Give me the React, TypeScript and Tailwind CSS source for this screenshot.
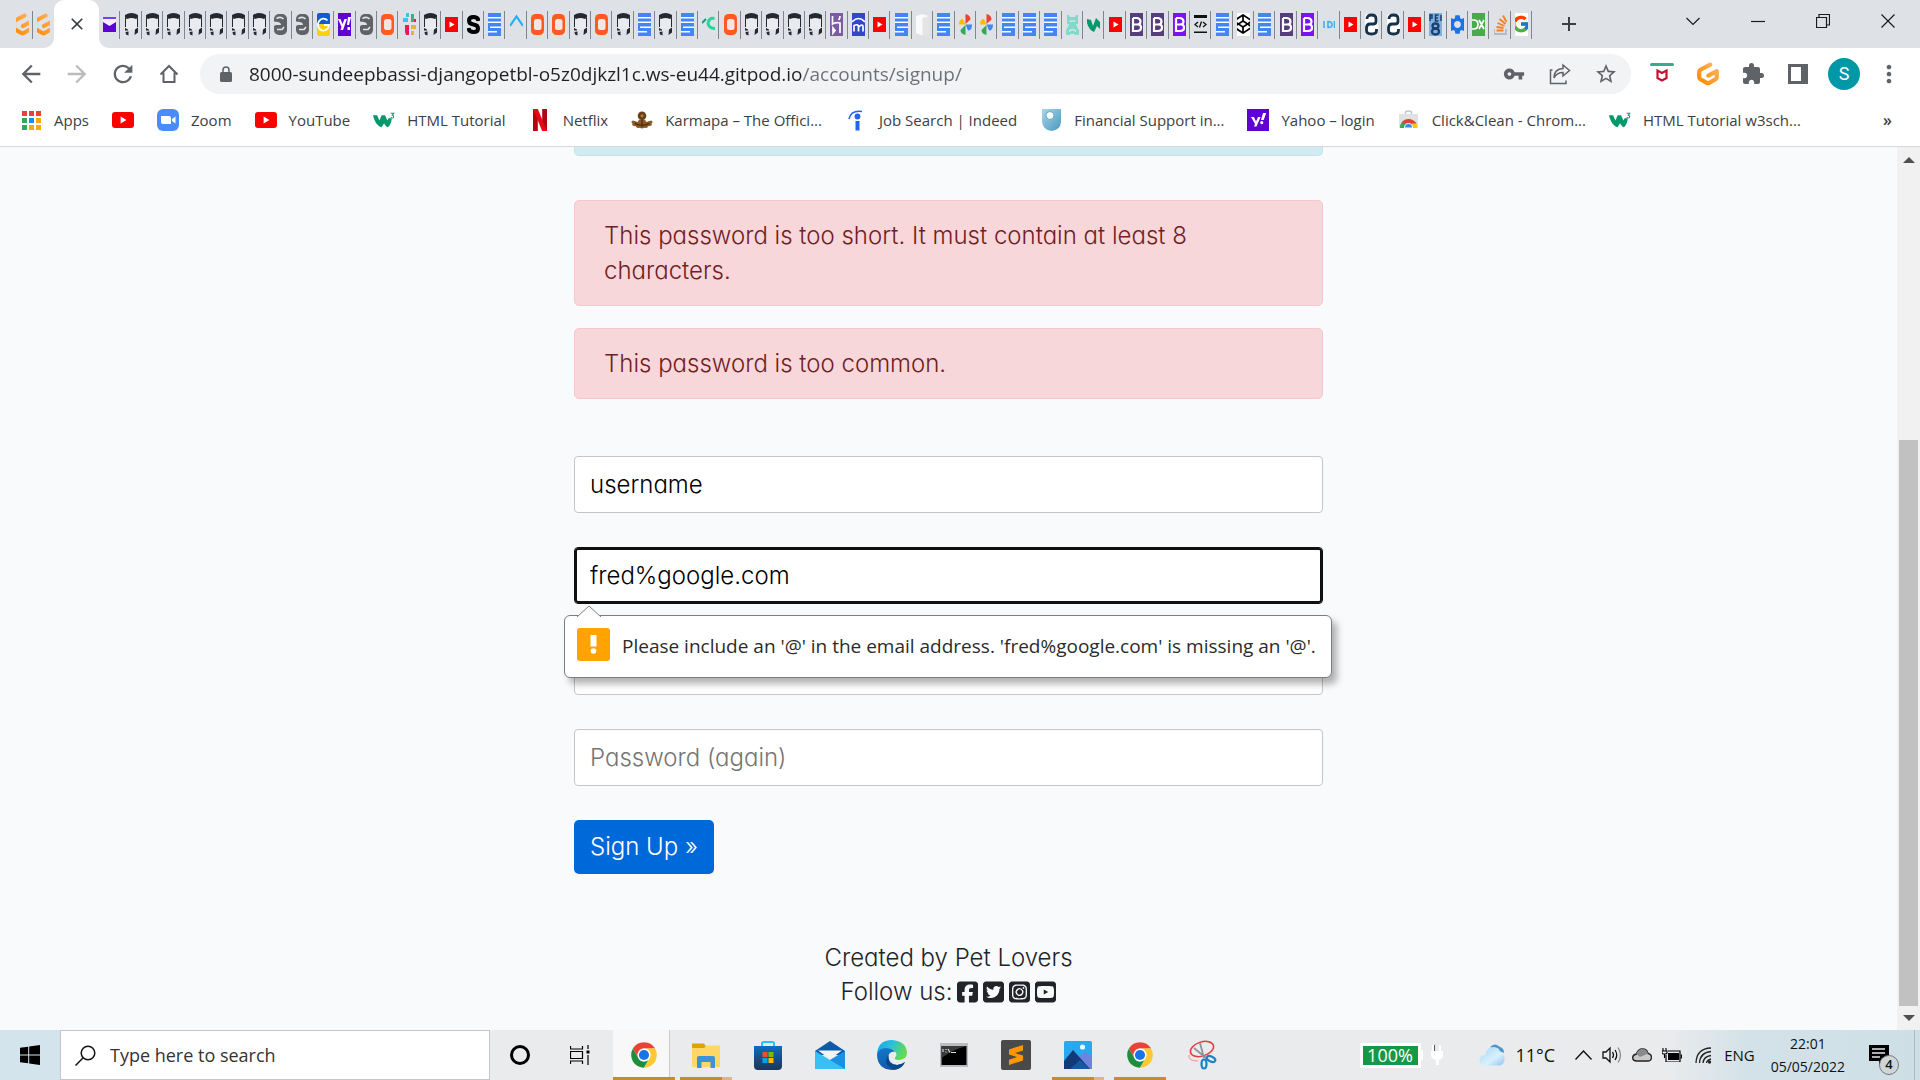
import React from "react";
import {
  FaCodepen,
  FaSquareFacebook, FaSquareTwitter, FaSquareInstagram, FaSquareYoutube,
} from "react-icons/fa6";
import { FcGoogle } from "react-icons/fc";
import {
  MdArrowBack, MdArrowForward, MdRefresh, MdVpnKey, MdStarBorder,
  MdExtension, MdMoreVert, MdSettings, MdClose, MdAdd,
} from "react-icons/md";

const segoe = "font-['Open_Sans','Noto_Sans',sans-serif]";
const poppins = "font-['Inter',sans-serif] [font-feature-settings:'cv11']";

type SvgProps = { className?: string };

/* ---------- shared logos ---------- */

function Gitpod({ className = "size-[23px]" }: SvgProps) {
  return (
    <svg viewBox="0 0 24 24" className={className} fill="none">
      <defs>
        <linearGradient id="gp" x1="1" y1="0" x2="0" y2="1">
          <stop offset="0" stopColor="#ffb45b" />
          <stop offset="1" stopColor="#ff8a00" />
        </linearGradient>
      </defs>
      <path d="M14.2 2.6 L4.6 7.6 Q3.2 8.4 3.2 10 V15 Q3.2 16.4 4.4 17.2 L10.8 20.9 Q12 21.6 13.2 20.9 L19.6 17.2 Q20.8 16.4 20.8 15 V9 L12.4 13.6" stroke="url(#gp)" strokeWidth="4.2" strokeLinejoin="round" strokeLinecap="round" />
    </svg>
  );
}

function Chrome({ className = "size-7" }: SvgProps) {
  return (
    <svg viewBox="0 0 48 48" className={className}>
      <path fill="#ea4335" d="M24 2a22 22 0 0 1 19.05 11H24a11 11 0 0 0-9.53 16.5L4.95 13A22 22 0 0 1 24 2z" />
      <path fill="#1e8e3e" d="M4.95 13L14.47 29.5A11 11 0 0 0 33.53 29.5L24 46A22 22 0 0 1 4.95 13z" />
      <path fill="#fcc934" d="M43.05 13A22 22 0 0 1 24 46L33.53 29.5A11 11 0 0 0 24 13z" />
      <circle cx="24" cy="24" r="11" fill="#fff" />
      <circle cx="24" cy="24" r="8.7" fill="#1a73e8" />
    </svg>
  );
}

function YouTube({ className = "h-4 w-[22px]" }: SvgProps) {
  return (
    <svg viewBox="0 0 22 16" className={className}>
      <rect width="22" height="16" rx="3" fill="#f00" />
      <path d="M8.6 4.6v6.8L14.4 8z" fill="#fff" />
    </svg>
  );
}

function W3({ className = "w-[23px] h-[17px]" }: SvgProps) {
  return (
    <svg viewBox="0 0 23 17" className={className}>
      <path d="M0 3h4.300l2.400 5.500L9 3h3.600l2.400 5.500L16.600 6l3 .5c-.3 4.500-2.200 8-4 9-1.700-.6-3-2-4-4.200L9 15.500C4.500 14.400 1.500 9.500 0 3z" fill="#04996a" />
      <path d="M18.500 1h3.200l-1.600 2c2.200.2 1.900 3-.1 2.800-.6 0-1.100-.2-1.500-.6" fill="none" stroke="#04996a" strokeWidth="1.100" />
    </svg>
  );
}

/* ---------- tab favicons ---------- */

function Strip({ bg, children, color = "white" }: { bg?: string; children: React.ReactNode; color?: string }) {
  return (
    <svg viewBox="0 0 13 23" className="h-[23px] w-[13px] shrink-0">
      {bg && <rect width="13" height="23" fill={bg} />}
      <g fill={color}>{children}</g>
    </svg>
  );
}

function Fav({ kind }: { kind: string }) {
  switch (kind) {
    case "gp":
      return <Gitpod className="size-[23px] shrink-0" />;
    case "ml":
      return <Strip><rect y="4" width="13" height="15" fill="#5f01d1" /><rect y="4" width="13" height="2" fill="#7b3df0" /><path d="M0 6h13v3l-6.500 4L0 9z" fill="#f3eefe" /></Strip>;
    case "gh":
      return (
        <Strip>
          <path d="M.5 5h12l.5 9-3 2.500H3L0 14z" fill="#e9ebee" />
          <path d="M0 2Q6.500-2 13 2v2.500l-2 1.500Q6.500 4 2 6L0 4.500z" fill="#24292f" />
          <path d="M0 5h1v9H0zM12 5h1v9h-1zM10 16.500l3-2v5l-3.500 2.500zM3.500 18.500v4L1 21.500.500 19zM0 15l3 1.500v1L0 17.500z" fill="#24292f" />
        </Strip>
      );
    case "gb":
      return (
        <Strip>
          <rect y="1" width="13" height="21" rx="5" fill="#5f6368" />
          <path d="M0 8.500l4 .5q3 .5 3 3H2l-2 1z" fill="#dee1e6" />
          <path d="M2.500 5.500q4-2.500 7 .5M3 16.500h5l2-2.500" fill="none" stroke="#dee1e6" strokeWidth="1.700" />
        </Strip>
      );
    case "ua":
      return <Strip><rect width="13" height="12" fill="#0b5fd1" rx="2" /><rect y="11" width="13" height="12" fill="#fbd20a" rx="2" /><path d="M10.500 7.500A5.500 6 0 1 0 12 12H7" fill="none" stroke="#fff" strokeWidth="1.800" /></Strip>;
    case "yh":
      return <Strip bg="#5f01d1"><path d="M0 6h2.500l2 5 2-5H9l-4 11H2.500l1-3zM10 4h3l-2 8H9zM9.500 14h2.500v3H9.500z" /></Strip>;
    case "or":
      return <Strip><rect y="1" width="13" height="21" rx="4.500" fill="#ff5a1f" /><rect x="3" y="6" width="7.500" height="11" rx="2.500" fill="#f1e6e2" /></Strip>;
    case "sl":
      return (
        <Strip>
          <path d="M0 5h5v4H0zM3 0h3v4H3z" fill="#36c5f0" /><path d="M8 1h3v8H8z" fill="#2eb67d" />
          <path d="M11 6h2v3h-2z" fill="#e01e5a" /><path d="M2 12h4v10H3l-1-3z" fill="#e01e5a" />
          <path d="M8 12h5v4H8zM8 18h3v4H8z" fill="#ecb22e" />
        </Strip>
      );
    case "yt":
      return <Strip><rect y="4" width="13" height="15" fill="#f00" /><path d="M4.500 8.500v6l5-3z" fill="#fff" /></Strip>;
    case "ss":
      return <Strip><path d="M11.500 8Q11 4 6.500 4 2 4 2 7.500T6.500 11.500 11 15.500 6.500 19 1.500 15" fill="none" stroke="#000" strokeWidth="4" /></Strip>;
    case "dc":
      return (
        <Strip bg="#4285f4">
          <path d="M0 4h13v1.500H0zM0 8.500h13v1.500H0zM2 13.500h11V15H2zM0 18h9v1.500H0z" fill="#fff" />
        </Strip>
      );
    case "az":
      return <Strip><path d="M0 13L6.500 3.500 13 13" fill="none" stroke="#21b2f5" strokeWidth="2.200" /></Strip>;
    case "cg":
      return <Strip><path d="M12.500 5.500q-6-1-6.500 5 1 5 7 5" fill="none" stroke="#25d695" strokeWidth="3" /><path d="M0 10l4-4" stroke="#0c9f7c" strokeWidth="2" /></Strip>;
    case "hk":
      return <Strip bg="#7b5aa6"><path d="M2.500 3v8q4-2 7.500-1v10M10 3q0 2.500-1.500 4M3 15v5l2-2.500z" fill="none" stroke="#fff" strokeWidth="1.700" /></Strip>;
    case "md":
      return <Strip bg="#3147c8"><path d="M0 9q6.500-7 13 0" fill="none" stroke="#fff" strokeWidth="1.600" /><path d="M2 18.500v-6q4.500-2 4.500 1.500v4.500M6.500 14q4.500-4 4.500 0v4.500" fill="none" stroke="#fff" strokeWidth="1.700" /></Strip>;
    case "wb":
      return <Strip><path d="M0 3l6-2 7 2v17l-6.500 2.500L0 20z" fill="#fafafa" /><path d="M6.500 5L13 3v17l-6.500 2.500z" fill="#e4e4e4" /></Strip>;
    case "ph":
      return (
        <Strip>
          <path d="M6.500 1q5 1 5 5.500L6.500 11z" fill="#ea4335" /><path d="M13 11.500q0 6-4 6l-2.500-6z" fill="#4285f4" />
          <path d="M6.500 22q-5-1-5-5l5-5z" fill="#34a853" /><path d="M0 11.500Q0 6 4 6l2.500 5.500z" fill="#fbbc04" />
        </Strip>
      );
    case "tc":
      return <Strip><path d="M1 2h2l1 2h5l1-2h2v9l-1 3 2 3v5h-3l-2-1H5l-2 1H0v-5l2-3-1-3z" fill="#7ddbc9" /><path d="M3.500 8h6M3 18.500q3.500-4 7 0M0 12h3M10 12h3" stroke="#dee1e6" strokeWidth="1.500" fill="none" /></Strip>;
    case "w3":
      return <Strip><path d="M0 6l4 1 2 6 3-8 4 4v7L10 13l-3 6q-5-2-7-9z" fill="#04996a" /></Strip>;
    case "bd":
      return <Strip bg="#563d7c"><path d="M3 5v13h4q4 0 4-3.500T7 11.500q3.500 0 3.500-3T7 5H3M3 11.500h4" fill="none" stroke="#fff" strokeWidth="2.200" /></Strip>;
    case "bb":
      return <Strip bg="#7a12f5"><path d="M3 5v13h4q4 0 4-3.500T7 11.500q3.500 0 3.500-3T7 5H3M3 11.500h4" fill="none" stroke="#fff" strokeWidth="2.200" /></Strip>;
    case "co":
      return <Strip><path d="M0 2h13v3H0zM0 18.500h13V20H0z" fill="#111" /><path d="M4 9l-3 2.500L4 14M9 9l3 2.500L9 14M7.500 8.500l-2 6" stroke="#111" strokeWidth="1.300" fill="none" /></Strip>;
    case "cp":
      return <span className="flex size-[23px] shrink-0 items-center justify-center bg-white"><FaCodepen className="size-5 text-black" /></span>;
    case "id":
      return <Strip><rect y="7" width="13" height="9" fill="#d5e4ee" /><path d="M2 8v7M6 8.500v6q4.500 0 4-3.500-.5-2.500-4-2.500zM12.500 8v7" stroke="#47aee3" strokeWidth="1.600" fill="none" /></Strip>;
    case "py":
      return (
        <Strip>
          <rect y="1" width="13" height="21" rx="3" fill="#fff" />
          <path d="M2 6q0-4 4.500-4T11 5.500v3q0 2.500-3 2.500H5q-3.500 0-3.500 4v2.500q0 3.500 5 3.500t5-3.500V16" fill="none" stroke="#16324a" strokeWidth="2.800" />
        </Strip>
      );
    case "p8":
      return (
        <Strip bg="#7fb1de">
          <path d="M1 8V2h2v3H1M9.500 2h-3v6h3M6.500 5h2.500M12 2v6" fill="none" stroke="#1d3f6e" strokeWidth="1.500" />
          <ellipse cx="6.500" cy="13" rx="3" ry="2.500" fill="none" stroke="#1d3f6e" strokeWidth="2.300" />
          <ellipse cx="6.500" cy="18.500" rx="3.500" ry="3" fill="none" stroke="#1d3f6e" strokeWidth="2.300" />
        </Strip>
      );
    case "st":
      return <MdSettings className="size-[23px] shrink-0 text-[#1a73e8]" />;
    case "dx":
      return <Strip bg="#4aa94a"><path d="M0 7h1.500q4.500 0 4.500 4.500T1.500 16H0M7 7l5 9M12 7l-5 9" stroke="#fff" strokeWidth="1.700" fill="none" /></Strip>;
    case "so":
      return (
        <Strip>
          <path d="M0 16v5h12v-5" stroke="#b5b9bd" strokeWidth="1.800" fill="none" />
          <path d="M2.500 17.500h7M2.500 14l7 1M3.500 10l7 3M5.500 6l6 5M9 2.500l3.500 6.500" stroke="#f48024" strokeWidth="1.800" />
        </Strip>
      );
    default:
      return <span className="flex size-[23px] shrink-0 items-center justify-center rounded bg-white"><FcGoogle className="size-5" /></span>;
  }
}

const tabs = (
  "ml gh gh gh gh gh gh gh gb gb ua yh gb or sl gh yt ss dc az or or gh or gh dc gh dc cg or gh gh gh gh hk md yt dc wb dc ph ph dc dc dc tc w3 yt bd bd bb co dc cp dc bd bb id yt py py yt p8 st dx so go"
).split(" ");

function Tab({ kind, last = false }: { kind: string; last?: boolean }) {
  return (
    <button aria-label="Tab" className="relative flex h-12 min-w-0 flex-1 items-center justify-center">
      <span className="flex w-[13px] justify-center overflow-hidden"><Fav kind={kind} /></span>
      {!last && <span className="absolute right-0 top-[11px] h-7 w-px bg-[#80868b]" />}
    </button>
  );
}

function TabStrip() {
  return (
    <div className="flex h-12 bg-[#dee1e6]">
      <div className="flex w-[54px] pl-3"><Tab kind="gp" /><Tab kind="gp" last /></div>
      <div className="relative flex h-12 w-[45px] items-center justify-center rounded-t-[10px] bg-white">
        <svg viewBox="0 0 10 10" className="absolute -left-2.5 bottom-0 size-2.5"><path d="M10 0v10H0A10 10 0 0 0 10 0z" fill="#fff" /></svg>
        <svg viewBox="0 0 10 10" className="absolute -right-2.5 bottom-0 size-2.5"><path d="M0 0v10h10A10 10 0 0 1 0 0z" fill="#fff" /></svg>
        <button aria-label="Close tab"><MdClose className="size-5 text-[#3c4043]" /></button>
      </div>
      <div className="flex min-w-0 flex-1">
        {tabs.map((k, i) => <Tab key={i} kind={k} />)}
      </div>
      <div className="flex w-[388px] justify-between">
        <button aria-label="New tab" className="flex w-[74px] items-center justify-center"><MdAdd className="size-6 text-[#3c4043]" /></button>
        <div className="flex h-[42px] text-[#1b1b1b]">
          {[
            ["Search tabs", "M.500 4L7 10.500 13.500 4"],
            ["Minimize", "M0 7.500h14"],
            ["Restore", "M.500 3.500h10v10H.500zM3 3.500V.500h10.500V11h-3"],
            ["Close", "M.500.500l13 13M13.500.500l-13 13"],
          ].map(([label, d]) => (
            <button key={label} aria-label={label} className="flex w-[65px] items-center justify-center">
              <svg viewBox="0 0 14 14" className="size-3.5" fill="none" stroke="currentColor" strokeWidth="1.200"><path d={d} /></svg>
            </button>
          ))}
        </div>
      </div>
    </div>
  );
}

/* ---------- toolbar ---------- */

function Toolbar() {
  const nav = "flex w-[46px] items-center justify-center";
  return (
    <div className="flex h-[52px] items-center bg-white pl-2 text-[#5f6368]">
      <button aria-label="Back" className={nav}><MdArrowBack className="size-7" /></button>
      <button aria-label="Forward" className={nav}><MdArrowForward className="size-7 text-[#babcbe]" /></button>
      <button aria-label="Reload" className={nav}><MdRefresh className="size-7" /></button>
      <button aria-label="Home" className={nav}>
        <svg viewBox="0 0 20 20" className="size-5" fill="none" stroke="currentColor" strokeWidth="2"><path d="M1.500 10.500L10 2l8.500 8.500M4.500 8.500V18h11V8.500" /></svg>
      </button>
      <div className={`ml-2 flex h-10 flex-1 items-center rounded-full bg-[#f1f3f4] pl-5 ${segoe}`}>
        <svg viewBox="0 0 12 16" className="h-4 w-3"><rect y="6" width="12" height="10" rx="1.500" fill="currentColor" /><path d="M3 7V4a3 3 0 0 1 6 0v3" fill="none" stroke="currentColor" strokeWidth="1.500" /></svg>
        <input
          aria-label="Address"
          defaultValue="8000-sundeepbassi-djangopetbl-o5z0djkzl1c.ws-eu44.gitpod.io/accounts/signup/"
          className="ml-[17px] h-9 min-w-0 flex-1 bg-[linear-gradient(90deg,#202124_553px,#6b6f74_553px)] bg-clip-text text-[19px] text-transparent outline-none"
        />
        <button aria-label="Passwords" className={nav}><MdVpnKey className="size-[22px]" /></button>
        <button aria-label="Share" className={nav}>
          <svg viewBox="0 0 22 22" className="size-[22px]" fill="none" stroke="currentColor" strokeWidth="1.500">
            <path d="M3.500 7H1.500v13.500h15.500v-3M14 2l6.500 5.500L14 13v-3.500q-6 0-9 5.500 0-9 9-9.500z" />
          </svg>
        </button>
        <button aria-label="Bookmark" className={nav}><MdStarBorder className="size-6" /></button>
        <span className="w-[2px]" />
      </div>
      <div className="ml-2 flex w-[281px] items-center">
        <button aria-label="McAfee" className={nav}>
          <svg viewBox="0 0 24 24" className="size-6" fill="none"><rect y="1" width="24" height="3" rx="1.500" fill="#3ba78b" /><path d="M7.500 8.500v7.500l4.500 2.500 4.500-2.500V8.500L12 11z" stroke="#c8102e" strokeWidth="2.200" /></svg>
        </button>
        <button aria-label="Gitpod" className={nav}><Gitpod className="size-6" /></button>
        <button aria-label="Extensions" className="flex w-11 items-center justify-center"><MdExtension className="size-6" /></button>
        <button aria-label="Side panel" className={nav}>
          <svg viewBox="0 0 20 20" className="size-5"><path fillRule="evenodd" d="M0 0h20v20H0zM3 3v14h10V3z" fill="currentColor" /></svg>
        </button>
        <button aria-label="Profile" className={nav}>
          <span className="flex size-8 items-center justify-center rounded-full bg-[#0097a7] font-['Roboto',sans-serif] text-lg text-white">S</span>
        </button>
        <button aria-label="Menu" className="flex w-11 items-center justify-center"><MdMoreVert className="size-7" /></button>
      </div>
    </div>
  );
}

/* ---------- bookmarks ---------- */

const dotColors = ["#ea4335", "#ea4335", "#ea4335", "#34a853", "#1a8cff", "#fbaa05", "#34a853", "#fbaa05", "#fbaa05"];

const bookmarks: [string, React.ReactNode][] = [
  ["Apps", <svg viewBox="0 0 19 19" className="size-[19px]">{dotColors.map((c, i) => <rect key={i} x={(i % 3) * 7} y={Math.floor(i / 3) * 7} width="5" height="5" fill={c} />)}</svg>],
  ["", <YouTube />],
  ["Zoom", <svg viewBox="0 0 22 22" className="size-[22px]"><rect width="22" height="22" rx="6" fill="#4a8cff" /><path d="M4 7h8q2 0 2 2v6H6q-2 0-2-2zM15 10l3.500-2.500v7L15 12z" fill="#fff" /></svg>],
  ["YouTube", <YouTube />],
  ["HTML Tutorial", <W3 />],
  ["Netflix", <svg viewBox="0 0 14 22" className="h-[22px] w-3.5"><path d="M0 0h4.800v22H0zM9.200 0H14v22H9.200z" fill="#b1060f" /><path d="M0 0h4.800L14 22H9.200z" fill="#e50914" /></svg>],
  ["Karmapa – The Offici...", (
    <svg viewBox="0 0 23 20" className="h-5 w-[23px]"><circle cx="11.500" cy="5.500" r="4.500" fill="#6b4017" /><circle cx="11.500" cy="5.500" r="1.600" fill="#b07a3a" /><path d="M8.500 9.500h6l1.500 2.500 5-1.500q2 .5 1.500 2l-1 1q1 1-.5 2.500l-3 .5q-1 2.500-3.500 1.500l-3 1-3-1Q6 19 5 16.500l-3-.5Q.500 14.500 1.500 13.500l-1-1q-.5-1.500 1.500-2L7 12z" fill="#8a5a26" /><path d="M4 13.500q7.500 4 15 0M11.500 9v8" stroke="#4d2c0f" strokeWidth="1.300" fill="none" /></svg>
  )],
  ["Job Search | Indeed", (
    <svg viewBox="0 0 16 22" className="h-[22px] w-4"><path d="M1 10Q3 1 14 2.500" stroke="#2164f3" strokeWidth="1.500" fill="none" /><circle cx="9.500" cy="7.500" r="2.900" fill="#2164f3" /><rect x="7.500" y="12" width="4" height="9.500" fill="#2164f3" /></svg>
  )],
  ["Financial Support in...", (
    <svg viewBox="0 0 19 22" className="h-[22px] w-[19px]"><defs><linearGradient id="sh" x1="0" y1="0" x2="1" y2="1"><stop offset="0" stopColor="#a9d5ea" /><stop offset="1" stopColor="#4a97bd" /></linearGradient></defs><path d="M0 0h19v13q-.5 8-9.500 9Q.500 21 0 12z" fill="url(#sh)" /><circle cx="8" cy="6.500" r="4" fill="#fff" stroke="#6aa5c0" /></svg>
  )],
  ["Yahoo – login", (
    <svg viewBox="0 0 22 22" className="size-[22px]"><rect width="22" height="22" fill="#5f01d1" /><path d="M4 8h3l2 4.500L11 8h2.600L9.500 17.500H7L8 15zM16 4h3.200l-2.500 7H14zM14.800 12a1.600 1.600 0 1 1-.1 3.200 1.600 1.600 0 0 1 .1-3.200z" fill="#fff" /></svg>
  )],
  ["Click&Clean - Chrom...", (
    <svg viewBox="0 0 19 20" className="h-5 w-[19px]"><path d="M6.500 4V2.500q0-1.500 3-1.500t3 1.500V4" fill="none" stroke="#c3c6c9" strokeWidth="1.500" /><path d="M0 4h19v14H0z" fill="#dfe1e3" /><path d="M1 18q0-8 8.500-8t8.500 8z" fill="#34a853" /><path d="M2.500 12.500Q5 9 9.500 9q5 0 8 4.500H9z" fill="#db4437" /><path d="M13 13.500h5v4.500h-5z" fill="#fbc116" /><path d="M5.500 18q0-4.500 4-4.500t4 4.500z" fill="#4285f4" stroke="#fff" /></svg>
  )],
  ["HTML Tutorial w3sch...", <W3 />],
];

function Bookmarks() {
  return (
    <nav className={`flex h-[47px] items-center gap-[23px] border-b border-[#d5d7da] bg-white pb-1.5 pl-5 text-[15px] text-[#3c4043] ${segoe}`}>
      {bookmarks.map(([label, icon], i) => (
        <a key={i} href="#" aria-label={label || "YouTube"} className="flex items-center gap-3 whitespace-nowrap">
          <span className="flex w-[22px] justify-center">{icon}</span>
          {label && <span>{label}</span>}
        </a>
      ))}
      <button aria-label="More bookmarks" className="ml-auto mr-7 text-base font-semibold leading-5">»</button>
    </nav>
  );
}

/* ---------- page ---------- */

const fieldBase =
  "h-[57px] w-full rounded-[4px] border bg-white px-[15px] text-2xl font-light text-black placeholder:text-[#757575] outline-none";
const field = `${fieldBase} border-[#c3c6c9]`;

function Page() {
  const alert =
    "rounded-[5px] border border-[#f5c6cb] bg-[#f8d7da] px-[29px] py-[17px] text-2xl font-[350] leading-[35px] text-[#721c24]";
  return (
    <main className={`flex min-w-0 flex-1 flex-col items-center overflow-hidden bg-[#f9fafc] ${poppins}`}>
      <div className="w-full max-w-[749px]">
        <div className="h-[9px] rounded-b-[5px] border border-t-0 border-[#bee5eb] bg-[#d1ecf1]" />
        <div className="mt-11 flex flex-col gap-[22px]">
          <div role="alert" className={alert}>This password is too short. It must contain at least 8 characters.</div>
          <div role="alert" className={alert}>This password is too common.</div>
        </div>
        <form className="mt-[57px] flex flex-col gap-[34px]" onSubmit={(e) => e.preventDefault()}>
          <input aria-label="Username" defaultValue="username" className={field} />
          <div className="relative">
            <input aria-label="Email" defaultValue="fred%google.com" className={`${fieldBase} border-[#101010] ring-2 ring-[#101010] ring-inset`} />
            <div role="tooltip" className={`absolute -left-2.5 top-[68px] z-10 flex h-[63px] items-center whitespace-nowrap rounded-[6px] border border-[#7d7d7d] bg-white pl-3 pr-[15px] text-[19px] text-[#2b2b2b] shadow-[5px_6px_7px_rgba(0,0,0,0.3)] ${segoe}`}>
              <svg viewBox="0 0 24 12" className="absolute -top-[11px] left-3 h-3 w-6"><path d="M0 12L12 1l12 11" fill="#fff" stroke="#7d7d7d" /></svg>
              <svg viewBox="0 0 33 33" className="mb-1 size-[33px]"><rect width="33" height="33" rx="3" fill="#ffa300" /><path d="M13.500 7h6v11.500h-6z" fill="#fff" /><circle cx="16.500" cy="23" r="2.800" fill="#fff" /></svg>
              <span className="ml-3">Please include an '@' in the email address. 'fred%google.com' is missing an '@'.</span>
            </div>
          </div>
          <input aria-label="Password" type="password" className={field} />
          <input aria-label="Password (again)" type="password" placeholder="Password (again)" className={field} />
          <button className="h-[54px] self-start rounded-[5px] bg-[#0069d9] px-4 text-2xl font-light text-white">Sign Up »</button>
        </form>
      </div>
      <footer className="mt-[67px] flex flex-col items-center text-2xl font-light leading-[34px] text-[#212529]">
        <p>Created by Pet Lovers</p>
        <p className="flex items-center gap-[5px]">
          <span>Follow us:</span>
          <a href="#" aria-label="Facebook"><FaSquareFacebook className="h-6 w-[21px]" /></a>
          <a href="#" aria-label="Twitter"><FaSquareTwitter className="h-6 w-[21px]" /></a>
          <a href="#" aria-label="Instagram"><FaSquareInstagram className="h-6 w-[21px]" /></a>
          <a href="#" aria-label="YouTube"><FaSquareYoutube className="h-6 w-[21px]" /></a>
        </p>
      </footer>
    </main>
  );
}

function Scrollbar() {
  return (
    <div className="flex w-[23px] flex-col items-center bg-[#f1f1f1]">
      <button aria-label="Scroll up" className="flex h-[26px] items-center"><svg viewBox="0 0 12 6" className="h-1.5 w-3"><path d="M0 6l6-6 6 6z" fill="#505050" /></svg></button>
      <div className="flex w-full flex-1 items-end justify-center"><div className="h-[68%] w-[19px] bg-[#c1c1c1]" /></div>
      <button aria-label="Scroll down" className="flex h-6 items-center"><svg viewBox="0 0 12 6" className="h-1.5 w-3"><path d="M0 0l6 6 6-6z" fill="#505050" /></svg></button>
    </div>
  );
}

/* ---------- taskbar ---------- */

const apps: { name: string; icon: React.ReactNode; state?: "active" | "stack" | "open" }[] = [
  { name: "Google Chrome", state: "active", icon: <Chrome /> },
  {
    name: "File Explorer", state: "stack", icon: (
      <svg viewBox="0 0 28 28" className="size-7"><path d="M0 2.500h12l2 3-2 3H0z" fill="#e0a008" /><path d="M0 7h12l2.500-2.500H28V26H0z" fill="#ffd766" /><path d="M5 17q0-2 2-2h14q2 0 2 2v10h-4.500v-6h-9v6H5z" fill="#3d93d6" /></svg>
    ),
  },
  {
    name: "Store", icon: (
      <svg viewBox="0 0 30 30" className="size-[30px]"><defs><linearGradient id="ms" x1="0" y1="0" x2="0" y2="1"><stop offset="0" stopColor="#0f6cbd" /><stop offset="1" stopColor="#1c3557" /></linearGradient></defs><path d="M9 6V3.500Q9 2 10.500 2h9Q21 2 21 3.500V6" fill="none" stroke="#27c4f4" strokeWidth="2" /><path d="M1 6h28v20q0 4-4 4H5q-4 0-4-4z" fill="url(#ms)" /><path d="M9.500 12h5v5h-5z" fill="#f25022" /><path d="M15.500 12h5v5h-5z" fill="#7fba00" /><path d="M9.500 18h5v5h-5z" fill="#00a4ef" /><path d="M15.500 18h5v5h-5z" fill="#ffb900" /></svg>
    ),
  },
  {
    name: "Mail", icon: (
      <svg viewBox="0 0 30 30" className="size-[30px]"><path d="M0 11L15 1l15 10v4H0z" fill="#0c5aa8" /><path d="M30 11L0 29h30z" fill="#1b8fe0" /><path d="M0 11l30 18H0z" fill="#38c0f5" /><path d="M3 10.500h24L15 19z" fill="#f4f4f4" /></svg>
    ),
  },
  {
    name: "Edge", icon: (
      <svg viewBox="0 0 30 30" className="size-[30px]"><defs><linearGradient id="e1" x1="0" y1="0" x2="1" y2=".4"><stop offset="0" stopColor="#1fa2e6" /><stop offset=".5" stopColor="#2bc0dc" /><stop offset="1" stopColor="#5fdc4f" /></linearGradient><linearGradient id="e2" x1="0" y1="0" x2=".3" y2="1"><stop offset="0" stopColor="#1578cf" /><stop offset="1" stopColor="#0f5aa8" /></linearGradient></defs>
        <path d="M0 14Q1 0 15 0q14 1 15 12.500 0 7-8 7.500-5 0-4-2.500 3-3 0-6-7-6-14-.500Q1 13 0 14z" fill="url(#e1)" />
        <path d="M0 14q2-6 9-6 6 0 9 4-5-1-6.500 3.500Q11 24 20 25q4 0 8-3-4 8-13 8Q0 29 0 14z" fill="url(#e2)" />
        <path d="M11.500 15Q10 25 20 25q4 0 8-3-3 7-10.500 7.800Q5 25 11.500 15z" fill="#0b4685" /></svg>
    ),
  },
  {
    name: "Command Prompt", icon: (
      <svg viewBox="0 0 28 28" className="size-7"><path d="M0 2h28v24H0z" fill="#b9bcc0" /><path d="M1.500 5h25v19h-25z" fill="#000" /><path d="M1.500 5h25Q14 8 1.500 17z" fill="#3a3a3a" /><path d="M3 8v3M6 8v1M6 10.500v1M8 8l2 3.500M11 11.500h5" stroke="#ddd" strokeWidth="1.100" /></svg>
    ),
  },
  {
    name: "Sublime Text", icon: (
      <svg viewBox="0 0 30 30" className="size-[30px]"><rect width="30" height="30" rx="2" fill="#4a4a4a" /><path d="M8 9.500L22 5v5.500l-8 2.600 8 2.400v5L8 25v-5.300l8-2.600-8-2.500z" fill="#ff9800" /></svg>
    ),
  },
  {
    name: "Photos", state: "stack", icon: (
      <svg viewBox="0 0 28 28" className="size-7"><rect width="28" height="28" rx="1.500" fill="#2aa8ee" /><path d="M14 17l7-6 7 5v12H14z" fill="#6d84dd" /><path d="M0 20L9 9l17 19H0z" fill="#123a78" /><path d="M6 28l10-9 10 9z" fill="#1b56a3" /><circle cx="18.500" cy="6" r="2.600" fill="#eaf8ff" /></svg>
    ),
  },
  { name: "Chrome", state: "open", icon: <Chrome /> },
  {
    name: "Snipping Tool", icon: (
      <svg viewBox="0 0 30 30" className="size-[30px]" fill="none"><ellipse cx="15" cy="9" rx="12" ry="7" transform="rotate(-18 15 9)" stroke="#e33d3d" strokeWidth="1.500" /><path d="M2 15q-1 6 9 6" stroke="#ef8d8d" /><path d="M7 8l12 10M13 3l4 15" stroke="#8e9499" strokeWidth="1.800" /><ellipse cx="17" cy="24" rx="2.500" ry="4.500" stroke="#1b82c5" strokeWidth="2.200" /><ellipse cx="24" cy="19" rx="4.500" ry="2.500" transform="rotate(25 24 19)" stroke="#1b82c5" strokeWidth="2.200" /></svg>
    ),
  },
];

function Taskbar() {
  return (
    <div className={`flex h-[50px] bg-[linear-gradient(90deg,#e9ebed_0%,#e9ebed_87%,#d3e2e8_91%,#cddfe5_100%)] text-[#111] ${segoe}`}>
      <button aria-label="Start" className="flex w-[60px] items-center justify-center bg-[#d4e4ed]">
        <svg viewBox="0 0 20 20" className="size-5"><path d="M0 2.800L8.200 1.700v7.800H0zM9.200 1.500L20 0v9.500H9.200zM0 10.500h8.200v7.800L0 17.200zM9.200 10.500H20V20L9.200 18.500z" /></svg>
      </button>
      <div className="flex w-[430px] items-center border border-[#c6c6c6] bg-white pl-3.5">
        <svg viewBox="0 0 21 21" className="size-[21px]" fill="none" stroke="#111" strokeWidth="1.500"><circle cx="13" cy="8" r="6.800" /><path d="M8.200 12.800L.500 20.500" /></svg>
        <input aria-label="Search" placeholder="Type here to search" className="ml-3.5 flex-1 bg-transparent text-lg outline-none placeholder:text-[#333]" />
      </div>
      <button aria-label="Cortana" className="flex w-[60px] items-center justify-center"><span className="size-5 rounded-full border-[3px] border-black" /></button>
      <button aria-label="Task View" className="mr-1 flex w-[59px] items-center justify-center">
        <svg viewBox="0 0 20 20" className="size-5" fill="none" stroke="#000" strokeWidth="1.200"><path d="M.500 1v3h12V1M.500 19v-3h12v3M.500 6.500h12v7H.500zM18 0v4M18 10v10" /><path d="M16.500 5.500h3v3h-3z" fill="#000" stroke="none" /></svg>
      </button>
      {apps.map((a) => (
        <button key={a.name} aria-label={a.name} className="relative flex w-[62px] items-center justify-center">
          {a.state === "active" && <span className="absolute inset-y-0 left-0 w-[57px] border-r border-[#c9cbcd] bg-[#f8f8f8]" />}
          <span className="relative">{a.icon}</span>
          {a.state === "active" && <span className="absolute inset-x-0 bottom-0 h-[3px] bg-[#cb8a28]" />}
          {a.state === "open" && <span className="absolute inset-x-[5px] bottom-0 h-[3px] bg-[#cb8a28]" />}
          {a.state === "stack" && <span className="absolute inset-x-[5px] bottom-0 h-[3px] border-r-[10px] border-[#dcb683] bg-[#cb8a28]" />}
        </button>
      ))}
      <div className="ml-auto flex items-center">
        <span className="flex h-[25px] w-[61px] items-center justify-center border-[3px] border-white bg-[#159947] text-lg text-white">100%</span>
        <span className="h-2.5 w-0.5 bg-white" />
        <svg viewBox="0 0 12 20" className="ml-2 h-5 w-3"><path d="M2 0v6M9 0v6" stroke="#fff" strokeWidth="2" /><path d="M3.500 0v6" stroke="#555" /><path d="M0 6h12v4q0 4-4 5v5H5v-5Q0 14 0 10z" fill="#fff" /></svg>
        <button className="ml-9 flex items-center gap-[11px] text-lg">
          <svg viewBox="0 0 26 22" className="h-[22px] w-[26px]"><defs><linearGradient id="cl" x1="0" y1="0" x2="1" y2="1"><stop offset="0" stopColor="#a5d5f5" /><stop offset=".6" stopColor="#d9f0fd" /><stop offset="1" stopColor="#8cc4ee" /></linearGradient></defs><path d="M11 3q5-5 10 0 4 1 4 6" fill="#4f93cf" /><path d="M5 21.500q-5-1-4.500-6Q2 11 6.500 11 7.500 3 14.500 3q6 0 7 6 4.500 1 4 7-1 5-5 5.500z" fill="url(#cl)" /></svg>
          <span>11°C</span>
        </button>
        <div className="ml-5 flex items-center gap-2.5">
          <svg viewBox="0 0 17 10" className="h-2.5 w-[17px]" fill="none" stroke="#111" strokeWidth="1.400"><path d="M.500 9.500l8-8.500 8 8.500" /></svg>
          <svg viewBox="0 0 20 18" className="h-[18px] w-5" fill="none" stroke="#111" strokeWidth="1.300"><path d="M1 6h3l4-4v14l-4-4H1zM10.500 6q2 3 0 6M13 4q3.500 5 0 10" /><path d="M16 1.500q5 7.500 0 15" stroke="#888" /></svg>
          <svg viewBox="0 0 20 14" className="h-3.5 w-5"><path d="M5 13Q.500 13 .700 9.500 1 6.500 4.500 6 6 1 10.500 1q4.500 0 5.500 4.500 3.500.500 3.500 4-.500 3.500-3.500 3.500z" fill="#c9c9c9" stroke="#222" strokeWidth="1.400" /><path d="M4.500 6Q6 1 10.500 1q4.500 0 5.500 4.500L8 9z" fill="#8a8a8a" /></svg>
          <svg viewBox="0 0 20 14" className="h-3.5 w-5"><path d="M6 5h11v7H6z" fill="#000" /><path d="M6 3h12v11H4V7M19.500 6.500v4" fill="none" stroke="#000" strokeWidth="1.200" /><path d="M1 0v3M4 0v3M0 3h5v2q0 1-2.500 1Q0 6 0 5zM2.500 6v4" fill="none" stroke="#000" strokeWidth="1.100" /></svg>
          <svg viewBox="0 0 17 17" className="ml-[3px] size-[17px]" fill="none" stroke="#222" strokeWidth="1.300"><path d="M1 16Q1.500 1.500 16 1M4.500 16Q5 5.500 16 4.500M8 16q.5-6.500 8-7.500M11.500 16q.5-3 4.500-4" /><circle cx="14.500" cy="15" r="1" fill="#222" /></svg>
        </div>
        <span className="ml-3 text-[15px]">ENG</span>
        <button className="ml-4 text-center text-sm leading-[23px]"><span className="block">22:01</span><span className="block">05/05/2022</span></button>
        <button aria-label="Notifications" className="relative ml-6 h-10 w-[30px]">
          <svg viewBox="0 0 20 20" className="absolute left-0 top-2.5 size-5"><path d="M0 0h20v16h-6l-4 4v-4H0z" /><path d="M3 4h13M3 8h13M3 12h8" stroke="#dfe8ec" strokeWidth="1.500" /></svg>
          <span className="absolute bottom-0 right-0 flex size-5 items-center justify-center rounded-full border border-[#777] bg-[#cfd6d9] text-[13px] font-semibold">4</span>
        </button>
        <span className="ml-[15px] mr-[5px] h-[50px] w-px bg-[#a9b9c0]" />
      </div>
    </div>
  );
}

export default function App() {
  return (
    <div className="flex h-screen flex-col overflow-hidden">
      <TabStrip />
      <Toolbar />
      <Bookmarks />
      <div className="flex min-h-0 flex-1"><Page /><Scrollbar /></div>
      <Taskbar />
    </div>
  );
}
